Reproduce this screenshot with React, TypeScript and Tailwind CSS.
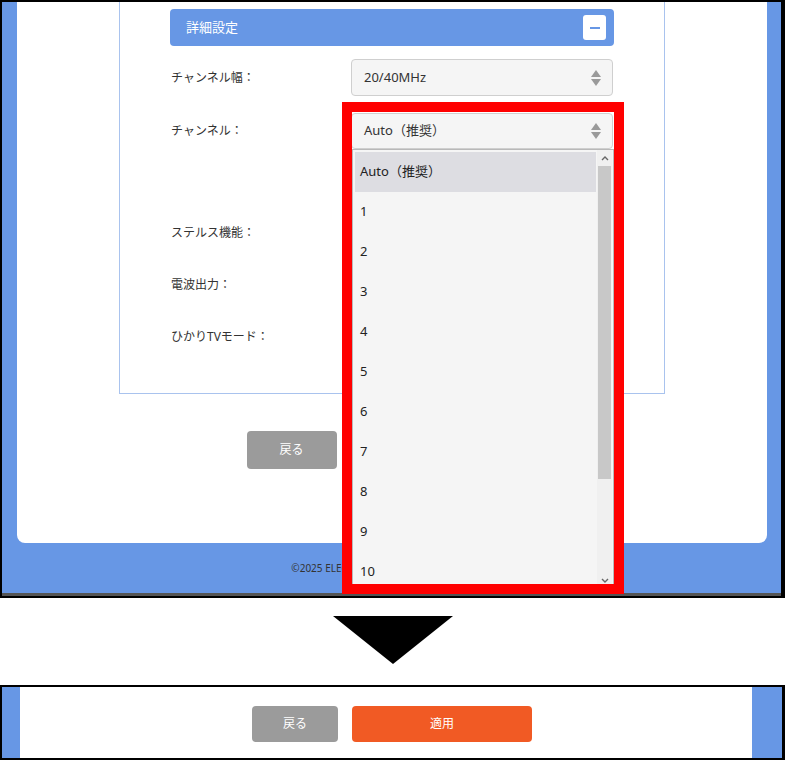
import React from "react";

const channels = ["Auto（推奨）", "1", "2", "3", "4", "5", "6", "7", "8", "9", "10"];

function SelectArrows() {
  return (
    <svg width="12" height="18" viewBox="0 0 12 18" className="shrink-0">
      <polygon points="6,1 11,8 1,8" fill="#9a9a9a" />
      <polygon points="1,10 11,10 6,17" fill="#9a9a9a" />
    </svg>
  );
}

function FakeSelect({ value, className = "" }: { value: string; className?: string }) {
  return (
    <div
      className={`w-[262px] flex items-center justify-between pl-[12px] pr-[10px] bg-[#f5f5f5] border border-[#cfcfcf] rounded-[4px] text-[13px] text-[#333] ${className}`}
    >
      <span>{value}</span>
      <SelectArrows />
    </div>
  );
}

function Row({ label, h, children }: { label: string; h: string; children?: React.ReactNode }) {
  return (
    <div className={`flex items-center ${h}`}>
      <span className="w-[181px] pl-[1px] text-[12px] text-[#333]">{label}</span>
      {children}
    </div>
  );
}

export default function App() {
  return (
    <div className="w-[785px] h-[760px] bg-white font-['Noto_Sans','Noto_Sans_CJK_JP',sans-serif]">
      {/* before */}
      <div className="relative h-[598px] border-black border-l-2 border-t-2 border-r-4 border-b-2 bg-[#6797e5] flex flex-col overflow-hidden">
        <div className="ml-[15px] w-[750px] h-[541px] bg-white rounded-b-[8px] flex flex-col">
          <div className="ml-[102px] w-[546px] border-x border-b border-[#a9c3ee] px-[50px] pb-[30px]">
            <div className="mt-[7px] h-[37px] bg-[#6797e5] rounded-[4px] flex items-center justify-between pl-[16px] pr-[8px]">
              <span className="text-[13px] text-white">詳細設定</span>
              <div className="w-[23px] h-[25px] bg-white rounded-[3px] flex items-center justify-center">
                <div className="w-[10px] h-[2px] bg-[#6797e5]" />
              </div>
            </div>
            <div className="mt-[13px]">
              <Row label="チャンネル幅：" h="h-[37px]">
                <FakeSelect value="20/40MHz" className="h-[37px]" />
              </Row>
            </div>
            <div className="mt-[17px] h-[94px] flex items-start">
              <Row label="チャンネル：" h="h-[36px]">
                <FakeSelect value="Auto（推奨）" className="h-[36px]" />
              </Row>
            </div>
            <Row label="ステルス機能：" h="h-[52px]" />
            <Row label="電波出力：" h="h-[52px]" />
            <Row label="ひかりTVモード：" h="h-[52px]" />
          </div>
          <div className="mt-[37px] flex justify-center gap-[15px] pl-[2px]">
            <button className="w-[90px] h-[38px] bg-[#9b9b9b] rounded-[4px] text-[12px] text-white">戻る</button>
            <button className="w-[188px] h-[38px] bg-[#f15a24] rounded-[4px] text-[12px] text-white">適用</button>
          </div>
        </div>
        <div className="flex-1 flex items-center justify-center pl-[12px] text-[10px] text-[#333]">
          ©2025 ELECOM CO., LTD. All Rights Reserved.
        </div>
        <div className="h-[3px] bg-[#555]" />

        {/* open dropdown list */}
        <div className="absolute left-[350px] top-[147px] w-[262px] h-[441px] bg-[#f5f5f5] border border-[#b9b9b9] overflow-hidden">
          <div className="pt-[2px] pl-[2px] pr-[17px]">
            {channels.map((c, i) => (
              <div
                key={c}
                className={`h-[40px] flex items-center pl-[5px] text-[13px] text-[#222] ${i === 0 ? "bg-[#dddde2]" : ""}`}
              >
                {c}
              </div>
            ))}
          </div>
          <div className="absolute right-[1px] top-0 bottom-0 w-[15px] bg-[#f0f0f0] flex flex-col">
            <div className="h-[16px] flex items-center justify-center">
              <svg width="8" height="6" viewBox="0 0 8 6">
                <polyline points="1,5 4,2 7,5" fill="none" stroke="#666" strokeWidth="1.4" />
              </svg>
            </div>
            <div className="mx-[1px] h-[313px] bg-[#c8c8c8]" />
            <div className="flex-1" />
            <div className="h-[16px] flex items-center justify-center">
              <svg width="8" height="6" viewBox="0 0 8 6">
                <polyline points="1,1 4,4 7,1" fill="none" stroke="#666" strokeWidth="1.4" />
              </svg>
            </div>
          </div>
        </div>

        {/* highlight frame */}
        <div className="absolute left-[340px] top-[100px] w-[282px] h-[492px] border-[10px] border-[#ff0000] pointer-events-none" />
      </div>

      {/* arrow */}
      <div className="h-[87px] flex justify-center pt-[18px]">
        <svg width="120" height="48" viewBox="0 0 120 48">
          <polygon points="0,0 120,0 60,48" fill="#000" />
        </svg>
      </div>

      {/* after */}
      <div className="h-[75px] border-black border-t-2 border-l-2 border-r-[3px] border-b-2 bg-[#6797e5] flex">
        <div className="ml-[18px] w-[732px] bg-white flex flex-col">
          <div className="flex-1 flex items-center justify-center gap-[14px] pl-[12px] pt-[2px]">
            <button className="w-[86px] h-[36px] bg-[#9b9b9b] rounded-[4px] text-[12px] text-white">戻る</button>
            <button className="w-[180px] h-[36px] bg-[#f15a24] rounded-[4px] text-[12px] text-white">適用</button>
          </div>
        </div>
      </div>
    </div>
  );
}
